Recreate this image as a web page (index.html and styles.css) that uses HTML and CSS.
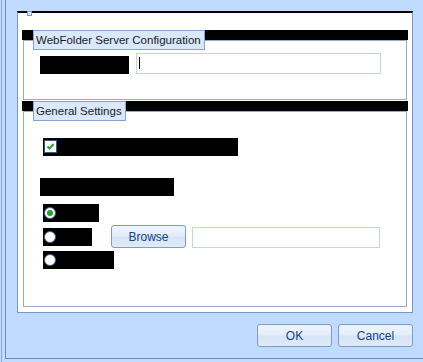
FILE: index.html
```html
<!DOCTYPE html>
<html lang="en">

<head>
    <meta charset="UTF-8">
    <title>WebFolder Settings</title>
    <link rel="stylesheet" href="styles.css">
</head>

<body>
    <div class="window">
        <div class="dialog">
            <div class="panel">
                <span class="handle"></span>

                <section class="group group-server">
                    <div class="group-bar"></div>
                    <span class="legend">WebFolder Server Configuration</span>
                    <div class="group-body">
                        <div class="field-row">
                            <span class="redacted label-server"></span>
                            <div class="textbox textbox-server"><span class="caret"></span></div>
                        </div>
                    </div>
                </section>

                <section class="group group-general">
                    <div class="group-bar"></div>
                    <span class="legend">General Settings</span>
                    <div class="group-body">
                        <div class="redacted check-row">
                            <span class="checkbox">
                                <svg width="11" height="11" viewBox="0 0 11 11">
                                    <path d="M2.5 5.5 L4.5 7.5 L8.5 3" fill="none" stroke="#2fa12f" stroke-width="2" />
                                </svg>
                            </span>
                        </div>

                        <div class="redacted caption"></div>

                        <div class="redacted radio-row radio-one">
                            <span class="radio checked"></span>
                        </div>

                        <div class="browse-row">
                            <div class="redacted radio-row radio-two">
                                <span class="radio"></span>
                            </div>
                            <button class="btn btn-browse">Browse</button>
                            <div class="textbox textbox-path"></div>
                        </div>

                        <div class="redacted radio-row radio-three">
                            <span class="radio"></span>
                        </div>
                    </div>
                </section>
            </div>

            <div class="actions">
                <button class="btn">OK</button>
                <button class="btn">Cancel</button>
            </div>
        </div>
    </div>
</body>

</html>
```

FILE: styles.css
```css
* {
    box-sizing: border-box;
}

body {
    margin: 0;
    width: 423px;
    height: 362px;
    overflow: hidden;
    background: #bfdbff;
    font-family: 'Liberation Sans', Arial, sans-serif;
    font-size: 12px;
    color: #1b1b1b;
}

.window {
    margin-left: 1px;
    border-left: 1px solid #8ea7ca;
    height: 362px;
}

.dialog {
    margin-left: 3px;
    height: 359px;
    border-left: 1px solid #6f8cb6;
    border-bottom: 1px solid #6f8cb6;
    padding: 11px 0 0 11px;
}

.panel {
    position: relative;
    width: 396px;
    height: 302px;
    background: #fff;
    border-top: 2px solid #000;
    border-left: 1px solid #7d97bf;
    border-right: 1px solid #7d97bf;
    border-bottom: 1px solid #7d97bf;
    padding: 17px 5px 5px 5px;
}

.handle {
    position: absolute;
    top: -2px;
    left: 9px;
    width: 5px;
    height: 5px;
    background: #d6e6fb;
    border: 1px solid #7d9ac5;
}

.group {
    position: relative;
}

.group-general {
    margin-top: 1px;
}

.group-bar {
    height: 10px;
    margin: 0 -1px;
    background: #000;
}

.group-body {
    border: 1px solid #97abcb;
}

.group-server .group-body {
    height: 60px;
}

.group-general .group-body {
    height: 196px;
}

.legend {
    position: absolute;
    top: 0;
    left: 10px;
    height: 20px;
    padding: 0 3px 0 2px;
    font-size: 11.5px;
    line-height: 18px;
    background: #d9e8fc;
    border: 1px solid #86a4cf;
    white-space: nowrap;
}

.redacted {
    background: #000;
}

.field-row {
    display: flex;
    align-items: flex-start;
    padding: 12px 0 0 16px;
}

.label-server {
    width: 89px;
    height: 18px;
    margin-top: 3px;
}

.textbox {
    background: #fff;
    border: 1px solid #bfd6f3;
}

.textbox-server {
    width: 245px;
    height: 21px;
    margin-left: 7px;
    padding: 3px 0 0 2px;
}

.caret {
    display: block;
    width: 1px;
    height: 12px;
    background: #000;
}

.check-row {
    display: flex;
    width: 195px;
    height: 18px;
    margin: 26px 0 0 19px;
    padding: 2px 0 0 1px;
}

.checkbox {
    display: flex;
    align-items: center;
    justify-content: center;
    width: 13px;
    height: 13px;
    background: #fff;
    border: 1px solid #2b5a8c;
}

.caption {
    width: 134px;
    height: 18px;
    margin: 22px 0 0 16px;
}

.radio-row {
    height: 18px;
    margin-left: 19px;
    padding: 3px 0 0 1px;
}

.radio-one {
    width: 56px;
    margin-top: 8px;
}

.radio-two {
    width: 49px;
    margin-top: 3px;
}

.radio-three {
    width: 71px;
    margin-top: 3px;
}

.radio {
    display: flex;
    align-items: center;
    justify-content: center;
    width: 12px;
    height: 12px;
    border-radius: 50%;
    background: #fff;
    border: 1px solid #3d5f8c;
}

.radio.checked::after {
    content: "";
    width: 6px;
    height: 6px;
    border-radius: 50%;
    background: #22a522;
}

.browse-row {
    display: flex;
    align-items: flex-start;
    margin-top: 3px;
}

.btn {
    width: 75px;
    height: 23px;
    padding: 0;
    font-family: 'Liberation Sans', Arial, sans-serif;
    font-size: 12px;
    color: #15428b;
    border: 1px solid #7f9cc5;
    border-radius: 3px;
    background: linear-gradient(#edf4fd 0%, #e3edfa 48%, #d5e4f7 52%, #e0eaf8 100%);
}

.btn-browse {
    margin-left: 19px;
}

.textbox-path {
    width: 188px;
    height: 21px;
    margin: 2px 0 0 6px;
}

.actions {
    display: flex;
    justify-content: flex-end;
    gap: 6px;
    width: 396px;
    margin-top: 11px;
}
```
